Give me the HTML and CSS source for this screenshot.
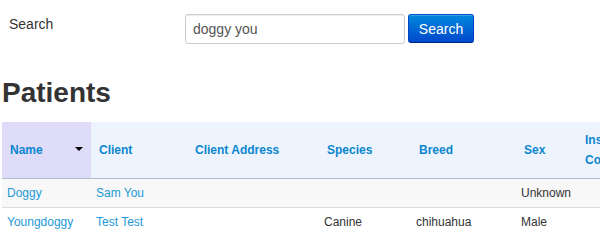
FILE: index.html
```html
<!DOCTYPE html>
<html lang="en">
<head>
<meta charset="UTF-8"/>
<title>Patients</title>
<link rel="stylesheet" href="styles.css">
</head>
<body>
<form class="search" onsubmit="return false">
  <label for="q">Search</label>
  <input type="text" id="q" value="doggy you"/>
  <button class="btn" type="submit">Search</button>
</form>

<h1>Patients</h1>

<div class="table-wrap">
<table class="grid">
  <colgroup>
    <col style="width:89px"><col style="width:96px"><col style="width:132px"><col style="width:92px">
    <col style="width:105px"><col style="width:61px"><col style="width:84px"><col style="width:90px">
  </colgroup>
  <thead>
    <tr>
      <th class="sorted"><span class="caret"></span>Name</th>
      <th>Client</th>
      <th>Client Address</th>
      <th>Species</th>
      <th>Breed</th>
      <th>Sex</th>
      <th>Insurance Company</th>
      <th>Policy</th>
    </tr>
  </thead>
  <tbody>
    <tr class="odd">
      <td><a href="#">Doggy</a></td>
      <td><a href="#">Sam You</a></td>
      <td></td>
      <td></td>
      <td></td>
      <td>Unknown</td>
      <td></td>
      <td></td>
    </tr>
    <tr>
      <td><a href="#">Youngdoggy</a></td>
      <td><a href="#">Test Test</a></td>
      <td></td>
      <td>Canine</td>
      <td>chihuahua</td>
      <td>Male</td>
      <td></td>
      <td></td>
    </tr>
  </tbody>
</table>
</div>
</body>
</html>
```

FILE: styles.css
```css
*{box-sizing:border-box}
body{margin:0;padding:0 2px;font-family:'Liberation Sans',Arial,sans-serif;color:#333;background:#fff;overflow:hidden}
.search{display:flex;align-items:flex-start;margin:14px 0 0}
.search label{width:183px;padding-left:7px;font-size:14px;line-height:20px}
.search input{width:220px;height:30px;padding:4px 7px;border:1px solid #ccc;border-radius:3px;font-size:14px;font-family:inherit;color:#555;box-shadow:inset 0 1px 1px rgba(0,0,0,.075)}
.btn{margin-left:3px;width:66px;height:29px;padding:0;border:1px solid #0044aa;border-color:#0055cc #0044cc #002a80;border-radius:3px;background:linear-gradient(#0088dd,#0048cc);color:#fff;font-size:14px;font-family:inherit;cursor:pointer;box-shadow:inset 0 1px 0 rgba(255,255,255,.2)}
h1{margin:32px 0 12px;font-size:28px;line-height:34px;font-weight:700;color:#333}
.table-wrap{overflow:hidden}
.grid{border-collapse:collapse;table-layout:fixed;width:749px}
.grid th{background:#eef4fd;color:#0b86d0;font-size:12px;font-weight:700;line-height:20px;padding:8px;text-align:left;border-bottom:1px solid #aebccb}
.grid th.sorted{background:#dedcf8}
.caret{float:right;width:0;height:0;margin-top:7px;border-left:4px solid transparent;border-right:4px solid transparent;border-top:4px solid #000}
.grid td{font-size:12px;line-height:20px;padding:4px 4px 4px 5px;border-bottom:1px solid #ddd;white-space:nowrap}
.grid tr:last-child td{border-bottom:0}
.grid tr.odd td{background:#f8f8f8}
.grid a{color:#2399d6;text-decoration:none}
```
